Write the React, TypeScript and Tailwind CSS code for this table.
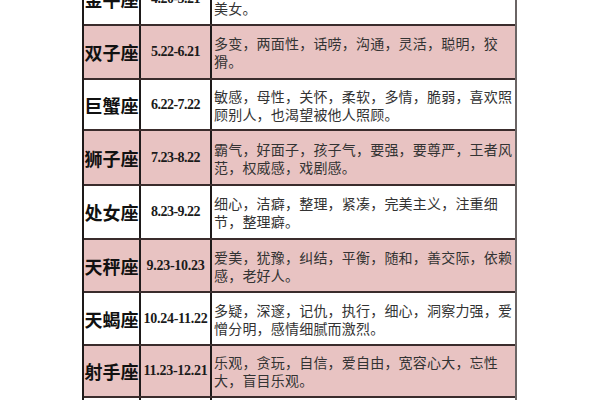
const rows = [
  { name: '金牛座', date: '4.20-5.21', lines: ['稳重，踏实，固执，慢热，享受，爱美食，爱', '美女。'], pink: false, h: 'h-[53px]' },
  { name: '双子座', date: '5.22-6.21', lines: ['多变，两面性，话唠，沟通，灵活，聪明，狡', '猾。'], pink: true, h: 'h-[54px]' },
  { name: '巨蟹座', date: '6.22-7.22', lines: ['敏感，母性，关怀，柔软，多情，脆弱，喜欢照', '顾别人，也渴望被他人照顾。'], pink: false, h: 'h-[51px]' },
  { name: '狮子座', date: '7.23-8.22', lines: ['霸气，好面子，孩子气，要强，要尊严，王者风', '范，权威感，戏剧感。'], pink: true, h: 'h-[55px]' },
  { name: '处女座', date: '8.23-9.22', lines: ['细心，洁癖，整理，紧凑，完美主义，注重细', '节，整理癖。'], pink: false, h: 'h-[54px]' },
  { name: '天秤座', date: '9.23-10.23', lines: ['爱美，犹豫，纠结，平衡，随和，善交际，依赖', '感，老好人。'], pink: true, h: 'h-[53px]' },
  { name: '天蝎座', date: '10.24-11.22', lines: ['多疑，深邃，记仇，执行，细心，洞察力强，爱', '憎分明，感情细腻而激烈。'], pink: false, h: 'h-[53px]' },
  { name: '射手座', date: '11.23-12.21', lines: ['乐观，贪玩，自信，爱自由，宽容心大，忘性', '大，盲目乐观。'], pink: true, h: 'h-[52px]' },
  { name: '摩羯座', date: '12.22-1.19', lines: ['稳重，务实，有野心，自律，保守，责任感强，', '耐心。'], pink: false, h: 'h-[53px]' },
];

export default function App() {
  return (
    <div className="w-[600px] h-[400px] overflow-hidden bg-white">
      <div className="ml-[82px] mt-[-27px] w-[435px] border-l-2 border-r-2 border-l-[#1e1a1a] border-r-[#6a6464]">
        {rows.map((r) => (
          <div
            key={r.name}
            className={`${r.h} flex border-b-2 border-[#3a2c2c] ${r.pink ? 'bg-[#e8c3c2]' : 'bg-white'}`}
          >
            <div className="w-[57px] shrink-0 border-r-2 border-[#1e1a1a] flex items-center justify-center">
              <span className="font-['Noto_Sans_CJK_SC',sans-serif] font-bold text-[18px] leading-none text-[#111] whitespace-nowrap">
                {r.name}
              </span>
            </div>
            <div className="w-[71px] shrink-0 border-r-2 border-[#1e1a1a] flex items-center justify-center">
              <span
                className={`font-['Liberation_Serif',serif] font-bold text-[14px] leading-none text-[#1a1a1a] whitespace-nowrap ${
                  r.date.length > 9 ? 'tracking-[-0.25px]' : 'tracking-[-0.5px]'
                }`}
              >
                {r.date}
              </span>
            </div>
            <div className="flex-1 flex flex-col justify-center pl-[2px]">
              {r.lines.map((l) => (
                <div
                  key={l}
                  className="font-['Noto_Sans_CJK_SC',sans-serif] text-[14px] leading-[18px] tracking-[0.2px] text-[#333] whitespace-nowrap"
                >
                  {l}
                </div>
              ))}
            </div>
          </div>
        ))}
      </div>
    </div>
  );
}
